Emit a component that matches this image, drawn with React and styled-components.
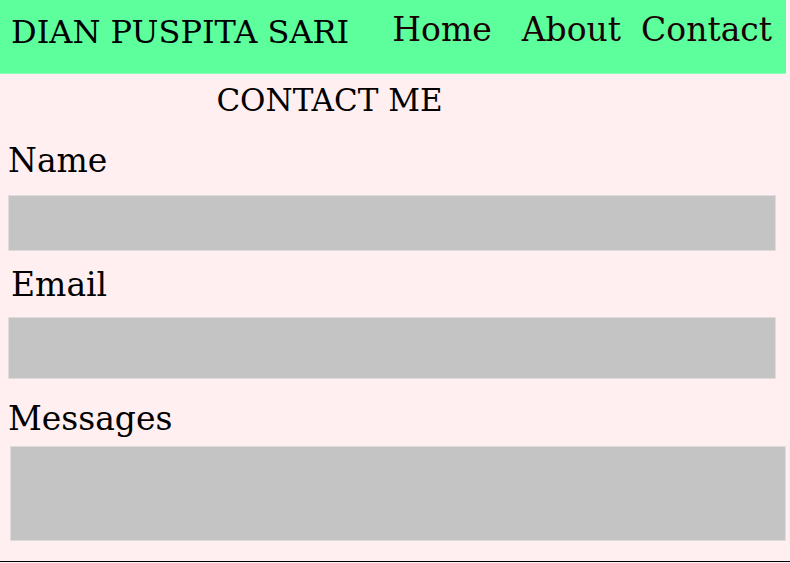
import React from "react";
import styled, { createGlobalStyle } from "styled-components";

const GlobalStyle = createGlobalStyle`
  html, body {
    margin: 0;
    padding: 0;
    background-color: #ffeff0;
    font-family: "DejaVu Serif", "Liberation Serif", serif;
    color: #000;
    overflow: hidden;
  }
`;

const Page = styled.div`
  width: 790px;
  height: 563px;
  display: flex;
  flex-direction: column;
  background-color: #ffeff0;
`;

const Header = styled.header`
  display: flex;
  align-items: center;
  width: 786px;
  height: 74px;
  background-color: #5cff9c;
  border-bottom: 1px solid #8dffb9;
  box-sizing: border-box;
`;

const Brand = styled.h1`
  margin: 0 0 0 11px;
  font-size: 32px;
  font-weight: normal;
  line-height: 1;
  padding-bottom: 9px;
`;

const Nav = styled.nav`
  display: flex;
  margin-left: 43px;
  padding-bottom: 14px;
`;

const NavLink = styled.a`
  font-size: 33px;
  margin-right: ${(p) => p.$gap || 0}px;
  color: #1a0000;
  text-decoration: none;
  cursor: pointer;
`;

const Title = styled.h2`
  margin: 8px 0 0;
  width: 659px;
  text-align: center;
  font-size: 31px;
  font-weight: normal;
  line-height: 36px;
`;

const Form = styled.form`
  display: flex;
  flex-direction: column;
  padding-left: 8px;
`;

const Label = styled.label`
  display: block;
  margin: ${(p) => p.$top}px 0 0 ${(p) => p.$indent || 0}px;
  font-size: 33px;
  line-height: 36px;
`;

const Field = styled.input`
  display: block;
  box-sizing: border-box;
  width: 768px;
  height: ${(p) => p.$h}px;
  margin: ${(p) => p.$top}px 0 0;
  background-color: #c4c4c4;
  border: 1px solid #dedcdc;
  outline: none;
`;

const Area = styled.textarea`
  display: block;
  box-sizing: border-box;
  width: 776px;
  height: 95px;
  margin: 9px 0 0 2px;
  background-color: #c4c4c4;
  border: 1px solid #dedcdc;
  resize: none;
  outline: none;
`;

const Footer = styled.footer`
  margin-top: auto;
  height: 1px;
  border-top: 1px solid #000;
`;

export default function App() {
  return (
    <Page>
      <GlobalStyle />
      <Header>
        <Brand>DIAN PUSPITA SARI</Brand>
        <Nav>
          <NavLink $gap={30}>Home</NavLink>
          <NavLink $gap={20}>About</NavLink>
          <NavLink>Contact</NavLink>
        </Nav>
      </Header>
      <Title>CONTACT ME</Title>
      <Form>
        <Label $top={25}>Name</Label>
        <Field $h={56} $top={16} />
        <Label $top={16} $indent={3}>Email</Label>
        <Field $h={62} $top={14} />
        <Label $top={22}>Messages</Label>
        <Area />
      </Form>
      <Footer />
    </Page>
  );
}
